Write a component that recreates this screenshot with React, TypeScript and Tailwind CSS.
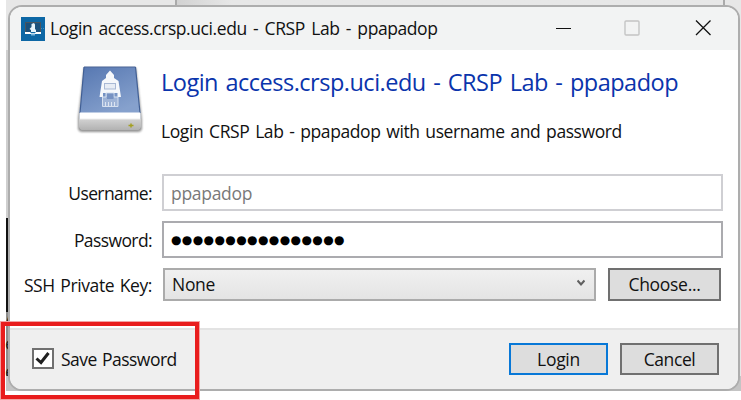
import React from "react";

function DriveIcon() {
  return (
    <svg className="h-[72px] w-[68px] shrink-0" viewBox="0 0 68 72">
      <defs>
        <linearGradient id="top" x1="0" y1="0" x2="0.6" y2="1">
          <stop offset="0" stopColor="#5677b1" />
          <stop offset="1" stopColor="#86a1cd" />
        </linearGradient>
        <linearGradient id="front" x1="0" y1="0" x2="0" y2="1">
          <stop offset="0" stopColor="#d2d2d2" />
          <stop offset="1" stopColor="#b2b2b2" />
        </linearGradient>
        <filter id="soft" x="-20%" y="-20%" width="140%" height="140%">
          <feGaussianBlur stdDeviation="1.1" />
        </filter>
      </defs>
      <path d="M8 6H60L66 58V67Q65 70 62 70H6Q3 70 2 67V56Z" fill="#666" opacity=".7" filter="url(#soft)" />
      <path d="M8 5H59.5L65 53V62Q65 67.500 61 67.500H7Q3 67.500 3 62V53Z" fill="#c9ced6" />
      <path d="M8 5H59.5L64 51H4Z" fill="url(#top)" />
      <path d="M8 5H59.5" stroke="#4d6698" />
      <path d="M8 5L4 51M59.5 5L64 51" stroke="#415f94" strokeWidth="1.2" />
      <path d="M4 50.500H64V57H4Z" fill="#fff" />
      <path d="M3 57H65V63Q65 68 61 68H7Q3 68 3 63Z" fill="url(#front)" />
      <path d="M4 57.2H64" stroke="#e4e4e4" />
      <path d="M34 8.500L38 13V16L42.500 19L45 35H41.500V31H38V34H30V31H27V35H23.500L26 19L30 16V13Z" fill="#f6f8fb" />
      <rect x="28.5" y="21.5" width="11" height="5.5" fill="#e8edf5" stroke="#a9b9d5" />
      <path d="M26.500 35H30V31H38V35H42V44.500H26.500Z" fill="#9fb4d7" stroke="#d6e0ef" />
      <path d="M31 31.500H37.500V37H31Z" fill="#7792c2" />
      <path d="M29.5 40V44M32.5 40V44M35.5 40V44M38.5 40V44" stroke="#dce4f1" />
      <path d="M55 61.500V65.500M52.500 63.500H57.500" stroke="#a4a022" strokeWidth="1.5" />
    </svg>
  );
}

function AppIcon() {
  return (
    <svg className="h-6 w-6 shrink-0" viewBox="0 0 24 24">
      <rect width="24" height="24" fill="#0d67a5" />
      <path d="M4.5 15V5.5H19.5V15" fill="#1b517c" stroke="#4c555d" />
      <path d="M10.500 7L13 6L14 7.500V12L15 13V15H10V13L8.500 12L10.500 10Z" fill="#e8f4fb" />
      <path d="M4 15H9.500V16H14.500V15H20V17H4Z" fill="#fff" />
      <path d="M10 16.500H14V18.5H10Z" fill="#7bb6dc" />
      <path d="M20 11.5H24" stroke="#438dbd" strokeDasharray="1 1" />
    </svg>
  );
}

export default function App() {
  return (
    <div className="relative h-[400px] w-[741px] overflow-hidden whitespace-nowrap bg-white pl-2 pt-[5px] font-['Open_Sans',sans-serif] text-[17.5px] leading-6 text-[#111]">
      <div className="absolute left-[6px] top-0 h-[391px] w-[735px] bg-[#e7e7e7]" />
      <div className="absolute left-[175px] top-0 h-5 w-[550px] border-x-2 border-[#aaa] bg-linear-to-r from-[#d2d2d2] via-[#e7e7e7] via-10% to-[#e7e7e7]" />
      <div className="absolute left-[6px] top-[50px] h-[168px] w-1 bg-[#cfcfcf]" />
      <div className="absolute left-[6px] top-[218px] h-[94px] w-4 bg-[#111]" />
      <div className="absolute left-[6px] top-[312px] h-[64px] w-4 bg-[#8d8d8d] text-[18px] leading-[21px] text-[#222]">
        <div className="-ml-px -mt-1">/</div>
        <div className="-ml-px pt-1">e</div>
        <div className="-ml-px pt-[7px]">e</div>
      </div>
      <div className="absolute left-[6px] top-[376px] h-[15px] w-[735px] bg-[#c4c4c4]" />

      <div className="relative flex h-[386px] w-[732px] flex-col overflow-hidden rounded-[14px] border-2 border-[#adadad] bg-white">
        <header className="flex h-[43px] shrink-0 items-center bg-[#f2f3f3] pl-[11px]">
          <AppIcon />
          <span className="-mt-0.5 ml-[5px] grow tracking-[-0.42px] [word-spacing:2.2px]">Login access.crsp.uci.edu - CRSP Lab - ppapadop</span>
          <svg className="-mt-0.5 mr-[27px] h-4 w-[156px]" viewBox="0 0 156 16" fill="none">
            <path d="M1 8.500H16" stroke="#111" />
            <rect x="70" y="1" width="14" height="14" rx="1" stroke="#c4c4c4" strokeWidth="1.4" />
            <path d="M141 .5L155.500 15M155.500 .5L141 15" stroke="#111" strokeWidth="1.3" />
          </svg>
        </header>

        <main className="h-[278px] shrink-0">
          <div className="flex h-[124px] pl-[66px] pt-3">
            <DriveIcon />
            <div className="ml-[17px]">
              <h1 className="pt-[3px] text-[23.5px] leading-[34px] tracking-[-0.5px] text-[#0a34ac] [word-spacing:1.9px]">Login access.crsp.uci.edu - CRSP Lab - ppapadop</h1>
              <p className="mt-5 tracking-[-0.42px] [word-spacing:1.7px]">Login CRSP Lab - ppapadop with username and password</p>
            </div>
          </div>
          <div className="flex h-[37px] items-center">
            <label className="mr-[10px] w-[142px] text-right tracking-[-0.6px]">Username:</label>
            <div className="flex h-[37px] w-[561px] items-center border-2 border-[#cfcfd3] pl-[7px] tracking-[-0.3px] text-[#797979]">ppapadop</div>
          </div>
          <div className="mt-[10px] flex h-[37px] items-center">
            <label className="mr-[10px] w-[142px] text-right tracking-[-0.6px]">Password:</label>
            <div className="flex h-[37px] w-[561px] items-center border-2 border-[#ababaf] pl-[7px] font-['DejaVu_Sans'] text-[12px] tracking-[0.4px] text-black">●●●●●●●●●●●●●●●●</div>
          </div>
          <div className="mt-[10px] flex h-[33px] items-center">
            <label className="mr-[11px] w-[142px] text-right tracking-[-0.4px] [word-spacing:1.4px]">SSH Private Key:</label>
            <div className="flex h-[33px] w-[433px] items-center justify-between border-2 border-[#ababab] bg-linear-to-b from-[#f0f0f0] to-[#e4e4e4] pl-[7px] pr-[9px] tracking-[-0.3px]">
              <span className="-mt-px">None</span>
              <svg className="-mt-1 h-2 w-2" viewBox="0 0 8 8" fill="none"><path d="M.5 1.500L4 5.500L7.500 1.500" stroke="#606060" strokeWidth="2.1" /></svg>
            </div>
            <button className="ml-3 h-[33px] w-[113px] border-2 border-[#707070] bg-[#ddd] tracking-[-0.3px]"><span className="relative -top-px">Choose...</span></button>
          </div>
        </main>

        <footer className="flex grow items-center border-t-2 border-[#e3e3e3] bg-[#efefef]">
          <div className="-mt-0.5 ml-[22px] flex h-[21px] w-[22px] items-center justify-center border-2 border-[#707070] bg-white">
            <svg className="h-[15px] w-4" viewBox="0 0 16 15" fill="none"><path d="M1.500 7.500L6 11.500L13.500 2" stroke="#202020" strokeWidth="3" /></svg>
          </div>
          <span className="-mt-0.5 ml-[7px] grow tracking-[-0.5px] [word-spacing:1px]">Save Password</span>
          <button className="-mt-0.5 h-8 w-[99px] border-2 border-[#0878d7] bg-[#ddd] tracking-[-0.3px]">Login</button>
          <button className="-mt-0.5 ml-3 mr-[19px] h-8 w-[99px] border-2 border-[#707070] bg-[#ddd] tracking-[-0.4px]">Cancel</button>
        </footer>
      </div>

      <div className="absolute left-[1px] top-[322px] h-[77px] w-[198px] border-4 border-[#e91d1d] outline outline-[#f3a3a3]" />
    </div>
  );
}
